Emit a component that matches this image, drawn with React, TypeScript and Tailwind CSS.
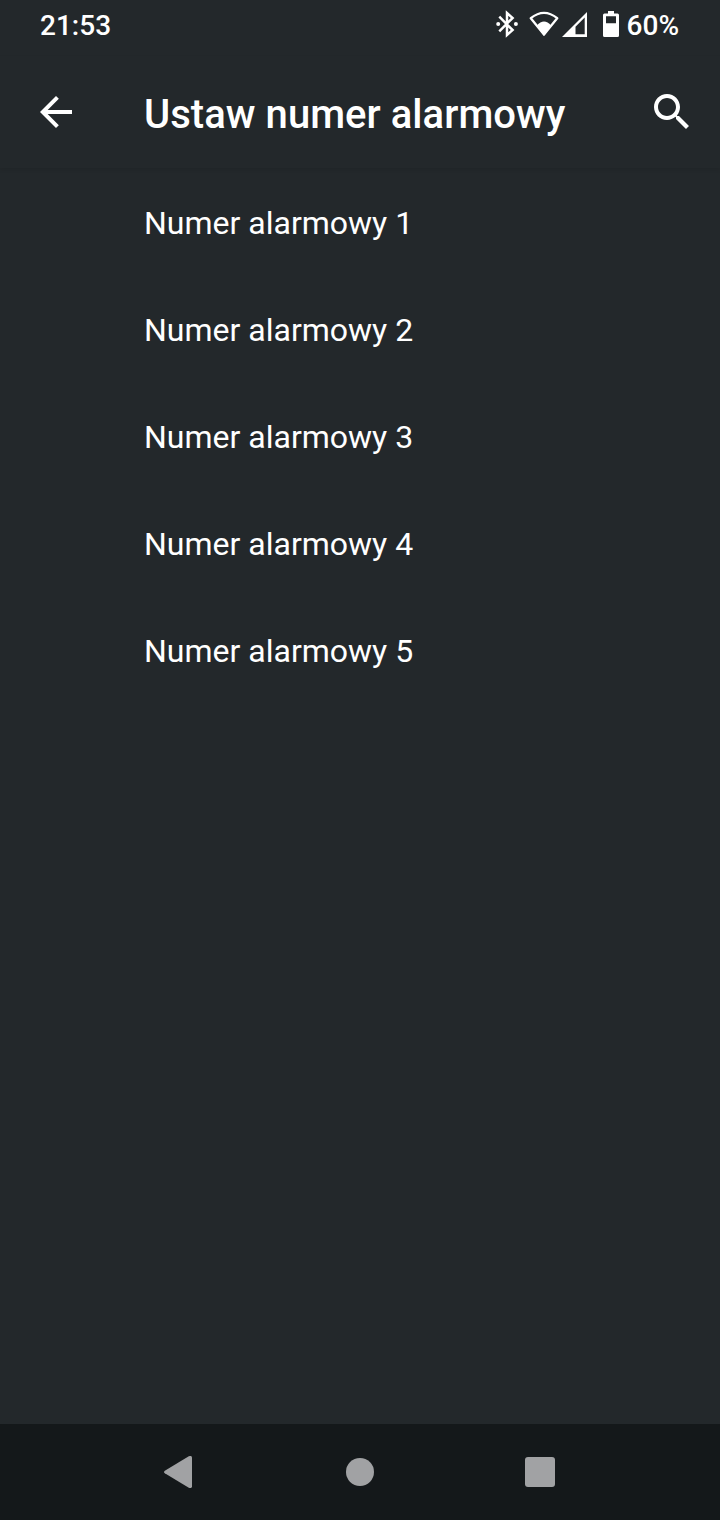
const items = [1, 2, 3, 4, 5];

function StatusBar() {
  return (
    <header className="flex h-14 items-start justify-between pt-[10px] pr-[41px] pl-10 text-[28px] leading-8 font-medium">
      <span>21:53</span>
      <div className="flex">
        <svg className="h-7 w-[22px]" viewBox="496 10 22 28" fill="none">
          <path
            d="M499.3 16.7L512.6 30L507 35V13L512.6 18L499.3 31.3"
            stroke="currentColor"
            strokeWidth="2.5"
          />
          <circle cx="498.2" cy="24" r="2" fill="currentColor" />
          <circle cx="515.9" cy="24" r="2" fill="currentColor" />
        </svg>
        <svg className="ml-[10px] h-7 w-8" viewBox="528 10 32 28">
          <path
            d="M530.8 18.2Q544 7.5 557.2 18.2L544 34.5Z"
            fill="none"
            stroke="currentColor"
            strokeWidth="2.3"
            strokeLinejoin="round"
          />
          <path d="M536.8 25.5Q544 17.5 551.2 25.5L544 36Z" fill="currentColor" />
        </svg>
        <svg className="ml-px h-7 w-7" viewBox="561 10 28 28">
          <path
            fillRule="evenodd"
            d="M562 37L587 12V37ZM575.5 34.3H584.7V17.5L575.5 26.7Z"
            fill="currentColor"
          />
        </svg>
        <svg className="ml-[13px] h-7 w-[18px]" viewBox="602 10 18 28">
          <path
            fillRule="evenodd"
            d="M608 11H614V13.5H617.5Q619 13.5 619 15V35.5Q619 37 617.5 37H604.5Q603 37 603 35.5V15Q603 13.5 604.5 13.5H608ZM606 16.3V23.3H616V16.3Z"
            fill="currentColor"
          />
        </svg>
        <span className="ml-[7px]">60%</span>
      </div>
    </header>
  );
}

function AppBar() {
  return (
    <div className="flex h-28 items-center pr-6 pl-8 shadow-[0_2px_4px_rgba(0,0,0,0.08)]">
      <button aria-label="Wstecz">
        <svg className="size-12" viewBox="0 0 24 24" fill="currentColor">
          <path d="M20 11H7.83l5.59-5.59L12 4l-8 8 8 8 1.41-1.41L7.83 13H20v-2z" />
        </svg>
      </button>
      <h1 className="mt-[5px] ml-16 flex-1 text-[40px] leading-[48px] font-medium tracking-[0.05px]">
        Ustaw numer alarmowy
      </h1>
      <button aria-label="Szukaj">
        <svg className="size-12" viewBox="0 0 24 24" fill="currentColor">
          <path d="M15.5 14h-.79l-.28-.27C15.41 12.59 16 11.11 16 9.5 16 5.91 13.09 3 9.5 3S3 5.91 3 9.5 5.91 16 9.5 16c1.61 0 3.09-.59 4.23-1.57l.27.28v.79l5 4.99L20.49 19l-4.99-5zm-6 0C7.01 14 5 11.99 5 9.5S7.01 5 9.5 5 14 7.01 14 9.5 11.99 14 9.5 14z" />
        </svg>
      </button>
    </div>
  );
}

function NavBar() {
  return (
    <nav className="flex h-24 items-center bg-[#14181a] pl-[162px] text-[#a1a2a4]">
      <svg className="h-8 w-8" viewBox="0 0 32 32" fill="currentColor">
        <path d="M2.8 14.7L26.8 .3Q30 -.8 30 1.8V30.2Q30 32.8 26.8 31.7L2.8 17.3Q1.2 16 2.8 14.7Z" />
      </svg>
      <div className="ml-[152px] size-7 rounded-full bg-current" />
      <div className="ml-[151px] size-[30px] rounded-[3px] bg-current" />
    </nav>
  );
}

export default function App() {
  return (
    <div className="flex h-[1520px] w-[720px] flex-col bg-[#23282b] font-[Roboto,sans-serif] text-white">
      <StatusBar />
      <AppBar />
      <ul className="flex-1 pt-px">
        {items.map((n) => (
          <li key={n} className="flex h-[107px] items-center pl-36 text-[32px] leading-10">
            Numer alarmowy {n}
          </li>
        ))}
      </ul>
      <NavBar />
    </div>
  );
}
